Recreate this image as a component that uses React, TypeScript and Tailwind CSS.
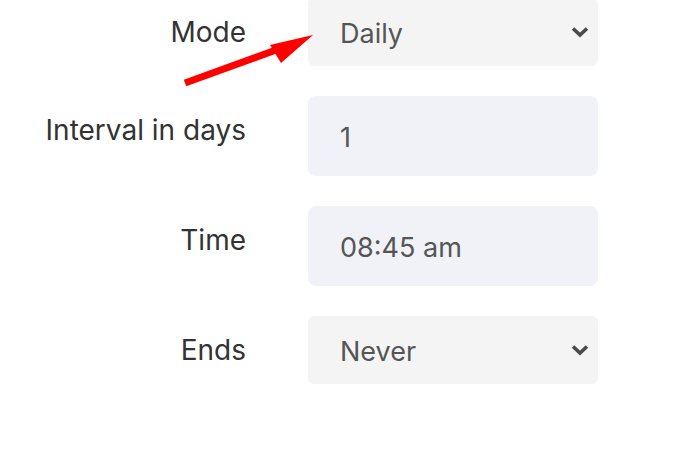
import React from "react";

const fields = [
  { label: "Mode", value: "Daily", kind: "select" },
  { label: "Interval in days", value: "1", kind: "input" },
  { label: "Time", value: "08:45 am", kind: "input" },
  { label: "Ends", value: "Never", kind: "select" },
];

function Chevron() {
  return (
    <svg width="20" height="14" viewBox="0 0 20 14" className="absolute right-[8px] top-1/2 -translate-y-1/2">
      <path d="M3 3.5 L10 10 L17 3.5" fill="none" stroke="#4a4a4a" strokeWidth="3.6" />
    </svg>
  );
}

export default function App() {
  return (
    <div className="relative w-[697px] h-[453px] bg-white overflow-hidden font-['Inter','Noto_Sans',sans-serif]">
      <div className="mt-[-2px] flex flex-col gap-[30px]">
        {fields.map((f) => (
          <div key={f.label} className="flex gap-[62px]">
            <label className="w-[246px] text-right text-[28px] leading-[36px] pt-[16px] text-[#333333]">
              {f.label}
            </label>
            {f.kind === "select" ? (
              <div className="relative w-[290px] h-[68px] rounded-[6px] bg-[#f4f4f4] flex items-center pl-[32px] pt-[4px] text-[27px] text-[#555555]">
                {f.value}
                <Chevron />
              </div>
            ) : (
              <div className="w-[290px] h-[80px] rounded-[8px] bg-[#f1f2f7] flex items-center pl-[32px] pt-[4px] text-[27px] text-[#555555]">
                {f.value}
              </div>
            )}
          </div>
        ))}
      </div>

      {/* red arrow pointing at the Mode select */}
      <svg className="absolute left-0 top-0" width="697" height="453" viewBox="0 0 697 453">
        <line x1="185" y1="83" x2="276" y2="50" stroke="#ff0000" strokeWidth="7" />
        <polygon points="313,35 270,45 281,63" fill="#ff0000" />
      </svg>
    </div>
  );
}
